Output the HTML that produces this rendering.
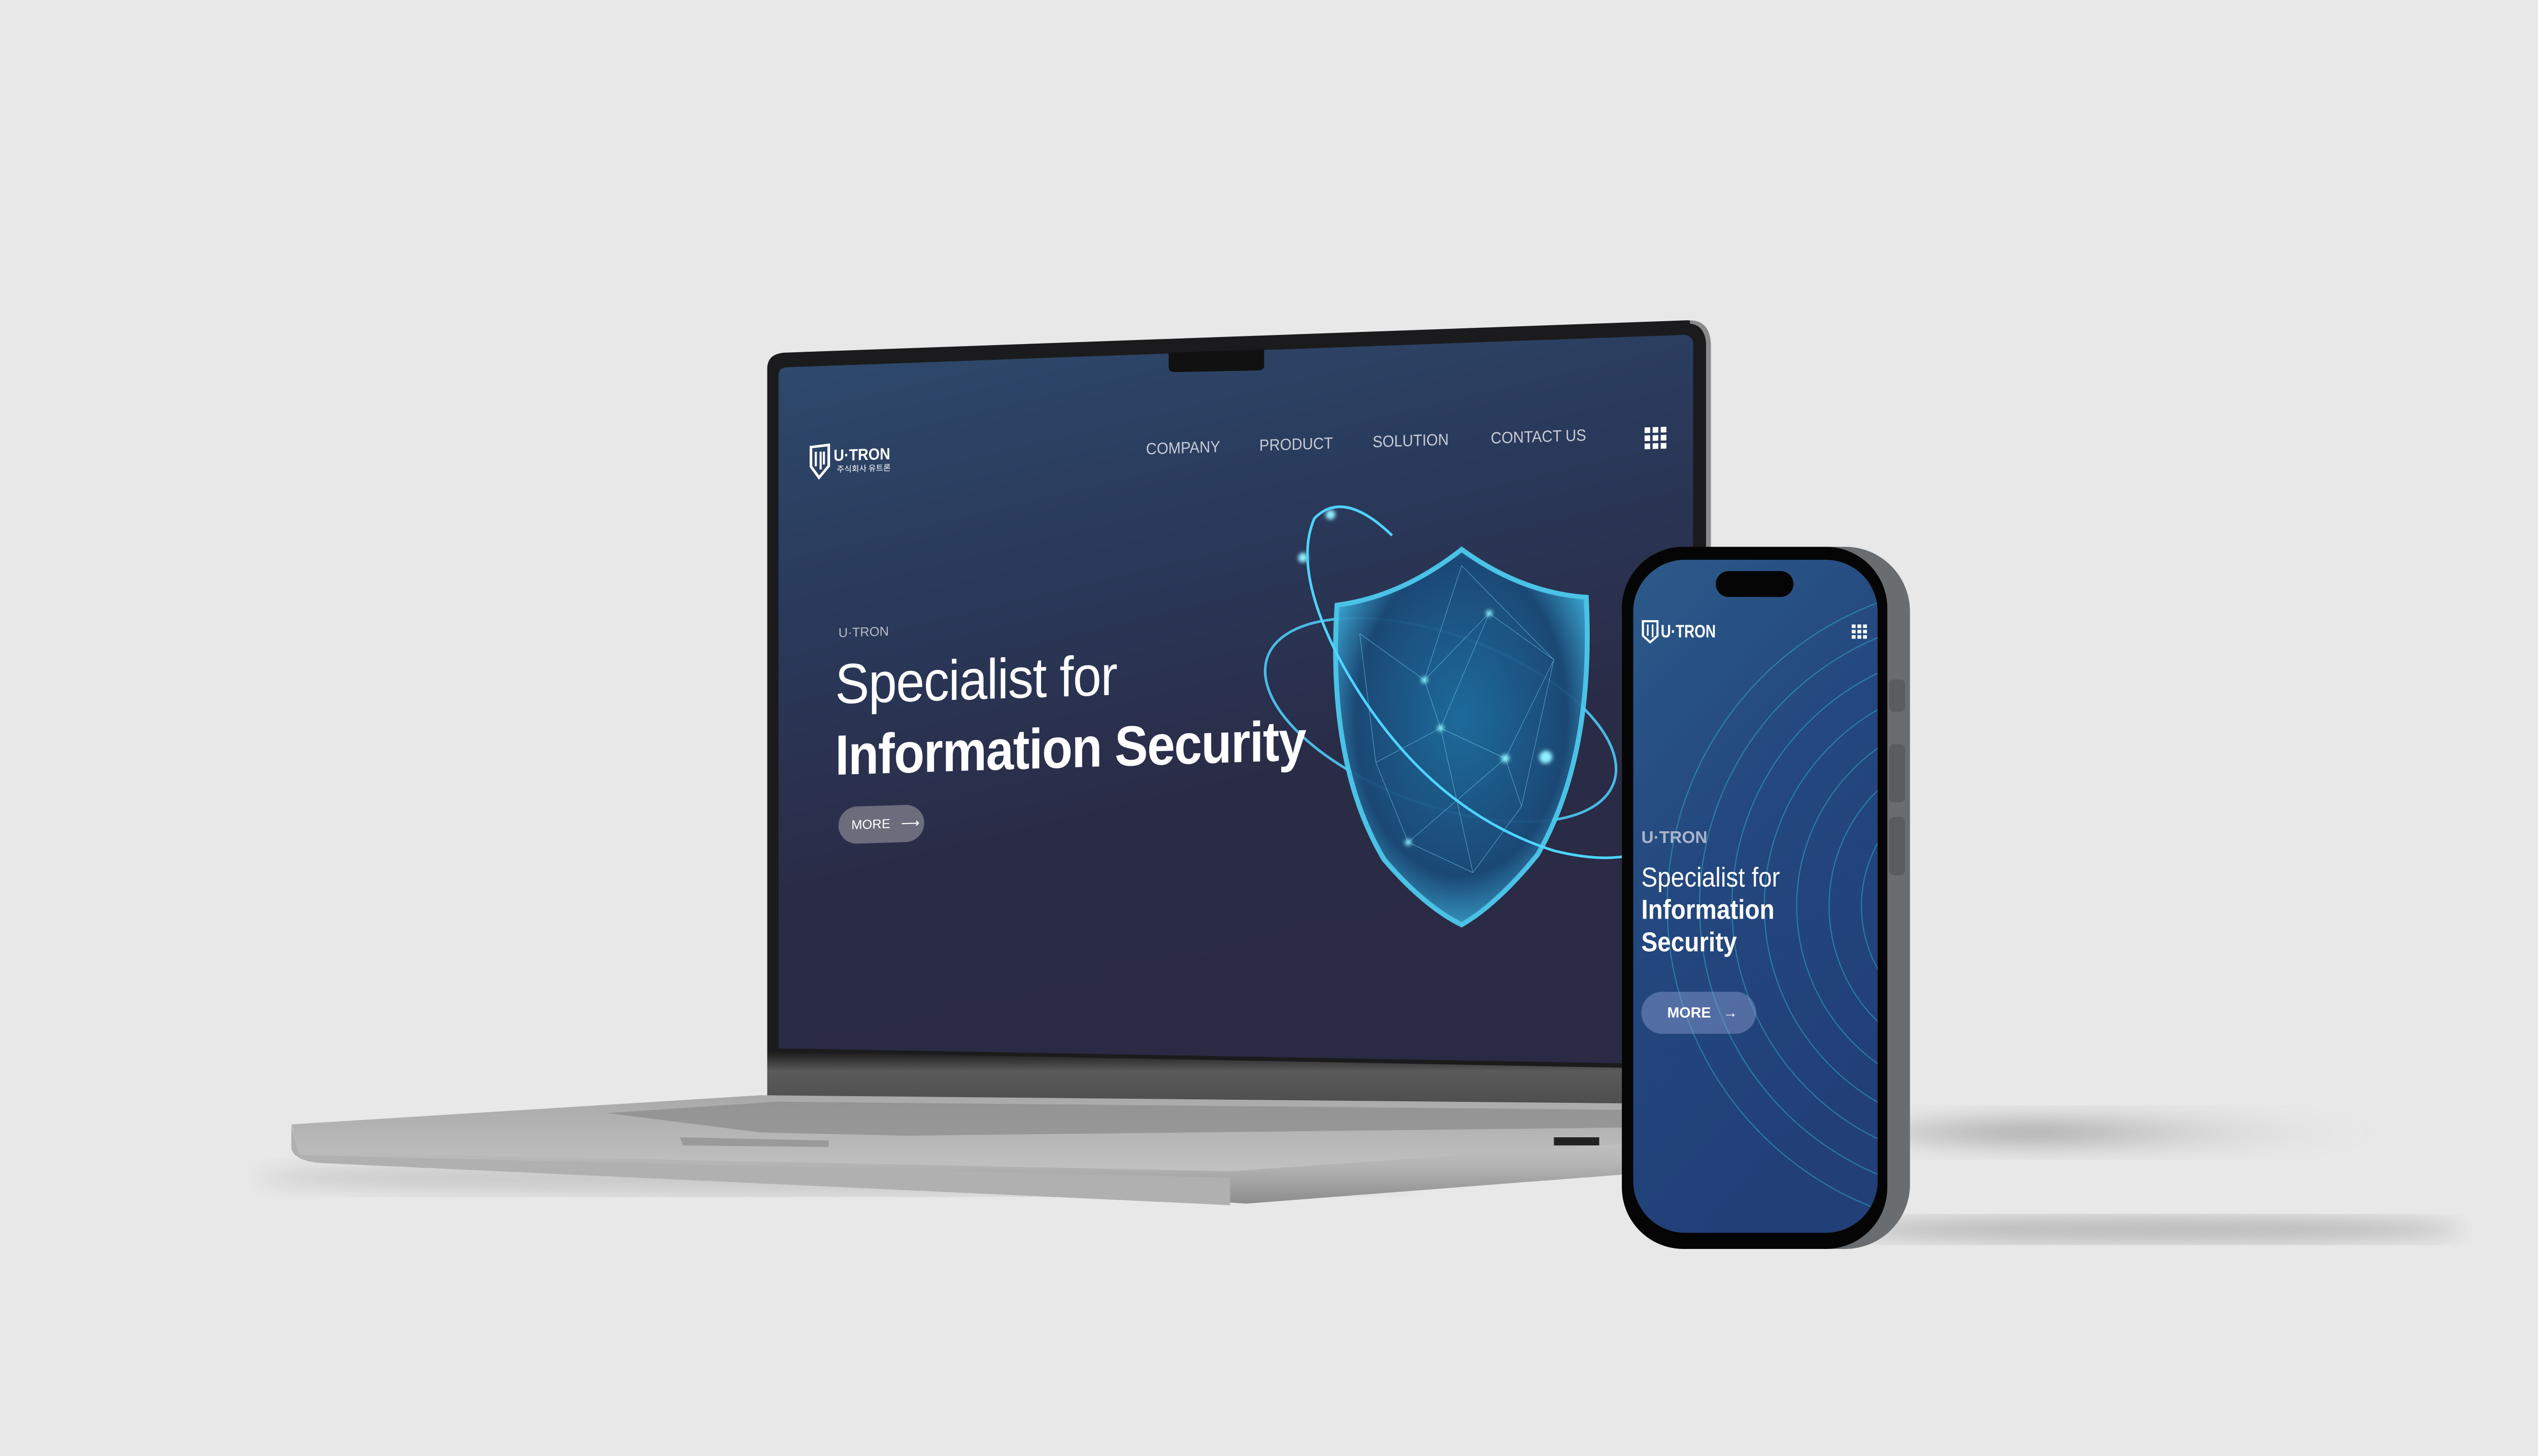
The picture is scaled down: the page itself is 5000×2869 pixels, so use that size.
<!DOCTYPE html>
<html><head><meta charset="utf-8"><style>
html,body{margin:0;padding:0;background:#e8e8e8;overflow:hidden}
body{width:5000px;height:2869px}
#s{position:absolute;left:0;top:0;width:1568px;height:900px;transform:scale(3.1888,3.1878);transform-origin:0 0;font-family:"Liberation Sans","Noto Sans CJK KR",sans-serif}
.a{position:absolute}
.n{position:absolute;font-size:10px;color:#c8cbd6;white-space:nowrap;transform:scaleX(0.92);transform-origin:0 0}
</style></head><body><div id="s">
<svg class="a" style="left:0;top:0" width="1568" height="900" viewBox="0 0 1568 900">
<defs>
<linearGradient id="scr" x1="0" y1="0" x2="0.3" y2="1">
<stop offset="0" stop-color="#2e4b6e"/><stop offset="0.35" stop-color="#2a3a5c"/><stop offset="0.7" stop-color="#2a2c47"/><stop offset="1" stop-color="#2a2a44"/></linearGradient>
<linearGradient id="base" x1="0" y1="0" x2="0" y2="1"><stop offset="0" stop-color="#c9c9c9"/><stop offset="0.5" stop-color="#b4b4b4"/><stop offset="1" stop-color="#8d8d8d"/></linearGradient>
<linearGradient id="deck" x1="0" y1="0" x2="0" y2="1"><stop offset="0" stop-color="#a9a9a9"/><stop offset="1" stop-color="#c2c2c2"/></linearGradient>
<linearGradient id="hinge" x1="0" y1="0" x2="0" y2="1"><stop offset="0" stop-color="#1a1a1a"/><stop offset="0.3" stop-color="#5a5a5a"/><stop offset="1" stop-color="#4a4a4a"/></linearGradient>
<radialGradient id="shd" cx="0.3" cy="0.5" r="0.7"><stop offset="0" stop-color="#8a8a8a" stop-opacity="0.8"/><stop offset="1" stop-color="#e8e8e8" stop-opacity="0"/></radialGradient>
<radialGradient id="sh" cx="0.5" cy="0.45" r="0.6"><stop offset="0" stop-color="#1d6fa0"/><stop offset="0.7" stop-color="#1b4a78"/><stop offset="1" stop-color="#3fb6e0"/></radialGradient>
<linearGradient id="ph" x1="0" y1="0" x2="0.4" y2="1"><stop offset="0" stop-color="#2c5a8a"/><stop offset="0.5" stop-color="#23477e"/><stop offset="1" stop-color="#223f78"/></linearGradient>
<clipPath id="pc"><rect x="1009" y="346" width="151" height="416" rx="32"/></clipPath>
<filter id="bl"><feGaussianBlur stdDeviation="6"/></filter>
<filter id="gl"><feGaussianBlur stdDeviation="1.2"/></filter>
</defs>
<ellipse cx="1320" cy="700" rx="160" ry="14" fill="url(#shd)" filter="url(#bl)"/>
<ellipse cx="1330" cy="760" rx="190" ry="8" fill="#9a9a9a" opacity="0.6" filter="url(#bl)"/>
<ellipse cx="520" cy="728" rx="360" ry="10" fill="#a8a8a8" opacity="0.5" filter="url(#bl)"/>
<path d="M474,228 Q474,219 484,218 L1042,198 Q1055,198 1056,210 L1056,662 L474,662 Z" fill="#1b1b1d"/>
<path d="M1044,198 Q1056,198 1057,212 L1057,340 L1054,340 L1054,212 Q1053,201 1044,200Z" fill="#8a8a8a"/>
<path d="M481,232 Q481,227 487,227 L1040,207 Q1046,207 1046,213 L1046,658 L481,648 Z" fill="url(#scr)"/>
<path d="M722,218 L781,216 L781,226 Q781,229 777,229 L726,230 Q722,230 722,227Z" fill="#111"/>
<path d="M474,650 L1003,660 L1003,690 L474,680 Z" fill="url(#hinge)"/>
<path d="M180,695 L470,677 L1003,682 L1003,708 L760,726 L185,714 Z" fill="url(#deck)"/>
<path d="M375,688 L480,681 L1003,686 L1003,697 L560,702 L470,700Z" fill="#8a8a8a" opacity="0.7"/>
<path d="M180,696 L185,715 L740,742 L770,744 L1003,726 L1003,707 L760,724 L185,712Z" fill="url(#base)"/>
<path d="M180,696 L180,710 Q182,718 200,719 L740,744 L760,745 L760,728 L185,714Z" fill="#b0b0b0"/>
<path d="M420,703 L512,705 L512,709 L422,708Z" fill="#9a9a9a"/>
<rect x="960" y="703" width="28" height="5" fill="#222"/>
<g transform="skewY(-1.8) translate(0,28)">
<ellipse cx="890" cy="445" rx="115" ry="52" fill="none" stroke="#4fd4ff" stroke-width="1.6" transform="rotate(22 890 445)" opacity="0.85"/>
<path d="M903,340 Q940,368 980,372 Q985,470 950,530 Q925,560 903,572 Q880,560 855,530 Q820,470 826,372 Q866,368 903,340Z" fill="url(#sh)" stroke="#4ccbef" stroke-width="3" opacity="0.95"/>
<g stroke="#7fdcff" stroke-width="0.35" opacity="0.55" fill="none">
<path d="M840,390 L880,420 L920,380 L960,410 L930,470 L890,450 L850,470 L870,520 L910,540 L940,500 L960,410"/>
<path d="M880,420 L890,450 L920,380 M850,470 L840,390 M910,540 L890,450 L930,470 L940,500 M870,520 L930,470 M903,350 L880,420 M903,350 L960,410"/>
</g>
<g fill="#8ff0ff" filter="url(#gl)"><circle cx="880" cy="420" r="2"/><circle cx="920" cy="380" r="2"/><circle cx="930" cy="470" r="2.5"/><circle cx="890" cy="450" r="2"/><circle cx="870" cy="520" r="2"/><circle cx="955" cy="470" r="4"/><circle cx="805" cy="342" r="3"/><circle cx="822" cy="316" r="3"/></g>
<path d="M860,330 Q830,300 812,318 Q798,350 830,410 Q880,500 960,528 Q985,535 1003,533" fill="none" stroke="#4fd4ff" stroke-width="1.6"/>
</g>
<rect x="1002" y="338" width="178" height="434" rx="40" fill="#6a6d70"/>
<rect x="1002" y="338" width="164" height="434" rx="38" fill="#050505"/>
<rect x="1167" y="420" width="10" height="20" rx="3" fill="#5a5d60"/>
<rect x="1167" y="460" width="10" height="36" rx="3" fill="#5a5d60"/>
<rect x="1167" y="505" width="10" height="36" rx="3" fill="#5a5d60"/>
<rect x="1009" y="346" width="151" height="416" rx="32" fill="url(#ph)"/>
<g fill="none" stroke="#2fb7c8" stroke-width="0.7" opacity="0.5" clip-path="url(#pc)">
<circle cx="1230" cy="560" r="60"/><circle cx="1230" cy="560" r="80"/><circle cx="1230" cy="560" r="100"/><circle cx="1230" cy="560" r="120"/><circle cx="1230" cy="560" r="140"/><circle cx="1230" cy="560" r="160"/><circle cx="1230" cy="560" r="180"/><circle cx="1230" cy="560" r="200"/>
</g>
<rect x="1060" y="353" width="48" height="16" rx="8" fill="#050505"/>
</svg>

<div class="a" style="left:481px;top:225px;width:565px;height:430px;transform:skewY(-1.8deg);transform-origin:0 50px">
 <svg class="a" style="left:19px;top:50px;overflow:visible" width="60" height="22" viewBox="0 0 60 22"><path d="M1,2 L12,1 L12,14 L6,21 L1,14Z" fill="none" stroke="#fff" stroke-width="1.6"/><path d="M4,5 V14 M7,5 V16 M9,5 V13" stroke="#fff" stroke-width="1.3"/><text x="15" y="11" font-size="10" font-weight="bold" fill="#fff" font-family="Liberation Sans" textLength="35" lengthAdjust="spacingAndGlyphs">U·TRON</text><text x="17" y="18" font-size="5" fill="#fff" font-family="Noto Sans CJK KR">주식회사 유트론</text></svg>
 <div class="n" style="left:227px;top:55px">COMPANY</div>
 <div class="n" style="left:297px;top:55px">PRODUCT</div>
 <div class="n" style="left:367px;top:55px">SOLUTION</div>
 <div class="n" style="left:440px;top:55px">CONTACT US</div>
 <svg class="a" style="left:535px;top:56px" width="14" height="14"><g fill="#fff"><rect x="0" y="0" width="3.5" height="3.5"/><rect x="5" y="0" width="3.5" height="3.5"/><rect x="10" y="0" width="3.5" height="3.5"/><rect x="0" y="5" width="3.5" height="3.5"/><rect x="5" y="5" width="3.5" height="3.5"/><rect x="10" y="5" width="3.5" height="3.5"/><rect x="0" y="10" width="3.5" height="3.5"/><rect x="5" y="10" width="3.5" height="3.5"/><rect x="10" y="10" width="3.5" height="3.5"/></g></svg>
 <div class="a" style="left:37px;top:163px;font-size:8px;color:#b8bccb">U·TRON</div>
 <div class="a" style="left:35px;top:180px;font-size:35px;color:#fff;letter-spacing:-0.5px;white-space:nowrap;transform:scaleX(0.9);transform-origin:0 0">Specialist for</div>
 <div class="a" style="left:35px;top:224px;font-size:35px;font-weight:bold;color:#fff;letter-spacing:-0.5px;white-space:nowrap;transform:scaleX(0.88);transform-origin:0 0">Information Security</div>
 <div class="a" style="left:37px;top:275px;width:53px;height:23px;border-radius:12px;background:#6b6c7c;color:#fff;font-size:8px;line-height:23px;padding-left:8px;box-sizing:border-box">MORE &nbsp;&nbsp;⟶</div>
</div>

<svg class="a" style="left:1014px;top:383px;overflow:visible" width="48" height="15" viewBox="0 0 48 15"><path d="M1,1 L10,1 L10,10 L5.5,14 L1,10Z" fill="none" stroke="#fff" stroke-width="1.3"/><path d="M4,3 V10 M7,3 V11" stroke="#fff" stroke-width="1"/><text x="12" y="11" font-size="11" font-weight="bold" fill="#fff" font-family="Liberation Sans" textLength="34" lengthAdjust="spacingAndGlyphs">U·TRON</text></svg>
<svg class="a" style="left:1144px;top:386px" width="10" height="9"><g fill="#fff"><rect x="0" y="0" width="2.4" height="2.2"/><rect x="3.5" y="0" width="2.4" height="2.2"/><rect x="7" y="0" width="2.4" height="2.2"/><rect x="0" y="3.3" width="2.4" height="2.2"/><rect x="3.5" y="3.3" width="2.4" height="2.2"/><rect x="7" y="3.3" width="2.4" height="2.2"/><rect x="0" y="6.6" width="2.4" height="2.2"/><rect x="3.5" y="6.6" width="2.4" height="2.2"/><rect x="7" y="6.6" width="2.4" height="2.2"/></g></svg>
<div class="a" style="left:1014px;top:512px;font-size:10.5px;font-weight:bold;color:#aab4cc">U·TRON</div>
<div class="a" style="left:1014px;top:533px;font-size:17px;color:#fff;line-height:20px;transform:scaleX(0.88);transform-origin:0 0;white-space:nowrap">Specialist for<br><b>Information<br>Security</b></div>
<div class="a" style="left:1014px;top:613px;width:71px;height:26px;border-radius:13px;background:rgba(140,160,210,0.45);color:#fff;font-size:9px;font-weight:bold;line-height:26px;padding-left:16px;box-sizing:border-box">MORE &nbsp;&nbsp;→</div>
</div></body></html>
